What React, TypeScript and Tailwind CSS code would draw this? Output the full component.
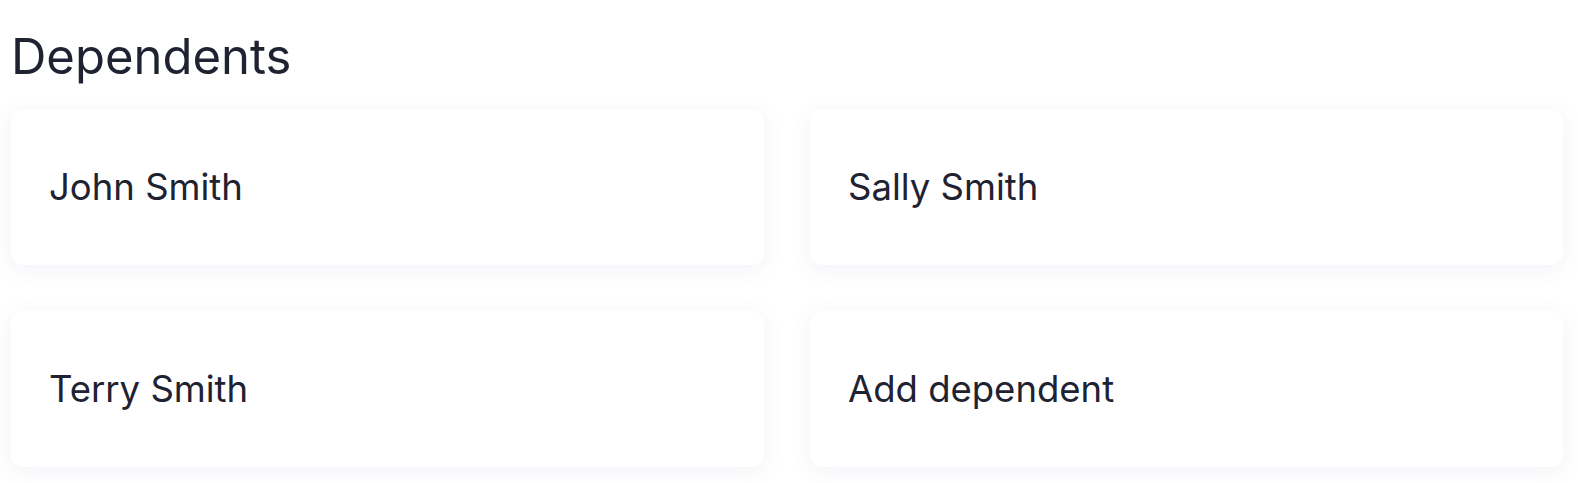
const dependents = ['John Smith', 'Sally Smith', 'Terry Smith', 'Add dependent'];

export default function App() {
  return (
    <div className="min-h-screen bg-white pl-[11px] pr-[15px] font-['Inter',sans-serif] text-[#1e2231]">
      <h1 className="pt-[32px] text-[49px] leading-[49px] font-normal">Dependents</h1>
      <div className="mt-[28px] grid grid-cols-2 gap-x-[46px] gap-y-[46px]">
        {dependents.map((name) => (
          <div
            key={name}
            className="flex h-[156px] items-center rounded-[12px] bg-white px-[38px] shadow-[0_4px_22px_rgba(82,91,155,0.08)]"
          >
            <span className="text-[36.5px] leading-none">{name}</span>
          </div>
        ))}
      </div>
    </div>
  );
}
